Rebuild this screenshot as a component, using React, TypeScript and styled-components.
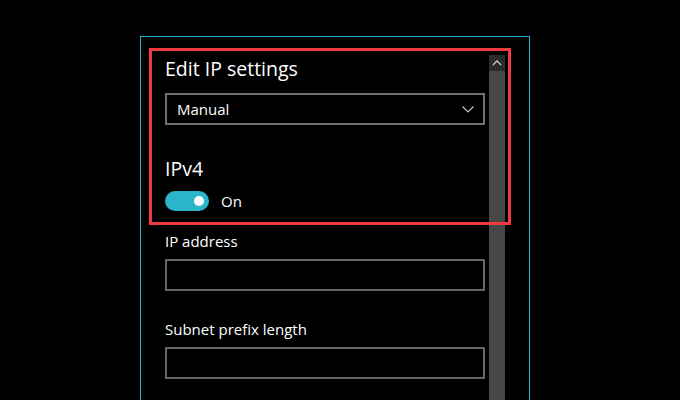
import React from "react";
import styled, { createGlobalStyle } from "styled-components";

const GlobalStyle = createGlobalStyle`
  html, body {
    margin: 0;
    padding: 0;
    background: #000;
    overflow: hidden;
  }
  body {
    font-family: "Open Sans", "Noto Sans", sans-serif;
    color: #fff;
  }
`;

const Page = styled.div`
  position: relative;
  width: 680px;
  height: 400px;
  padding: 36px 0 0 140px;
  box-sizing: border-box;
  overflow: hidden;
`;

const Frame = styled.div`
  width: 390px;
  height: 364px;
  box-sizing: border-box;
  border: 1px solid #29aecd;
  border-bottom: 0;
  display: flex;
`;

const Content = styled.div`
  width: 320px;
  padding: 18px 0 0 24px;
  display: flex;
  flex-direction: column;
`;

const Title = styled.div`
  font-size: 19.5px;
  line-height: 28px;
`;

const Heading = styled(Title)`
  margin-top: 30px;
`;

const Select = styled.div`
  margin-top: 10px;
  height: 32px;
  box-sizing: border-box;
  border: 2px solid #707070;
  display: flex;
  align-items: center;
  justify-content: space-between;
  padding: 0 9px 0 10px;
  font-size: 15px;
`;

const ToggleRow = styled.div`
  margin-top: 8px;
  display: flex;
  align-items: center;
  gap: 12px;
  font-size: 15px;
  line-height: 20px;
`;

const Track = styled.div<{ $on: boolean }>`
  width: 44px;
  height: 20px;
  border-radius: 10px;
  background: ${(p) => (p.$on ? "#2ab5c9" : "transparent")};
  display: flex;
  align-items: center;
  justify-content: ${(p) => (p.$on ? "flex-end" : "flex-start")};
  padding: 0 5px;
  box-sizing: border-box;
`;

const Knob = styled.div`
  width: 10px;
  height: 10px;
  border-radius: 50%;
  background: #fff;
`;

const Label = styled.div<{ $gap: number }>`
  margin-top: ${(p) => p.$gap}px;
  font-size: 15px;
  line-height: 20px;
`;

const Input = styled.div`
  margin-top: 8px;
  height: 32px;
  box-sizing: border-box;
  border: 2px solid #666;
`;

const ScrollBar = styled.div`
  margin: 18px 0 0 4px;
  width: 16px;
  display: flex;
  flex-direction: column;
`;

const ScrollButton = styled.div`
  height: 16px;
  background: #2b2b2b;
  display: flex;
  align-items: center;
  justify-content: center;
`;

const ScrollTrack = styled.div`
  flex: 1;
  background: #474747;
`;

const Highlight = styled.div`
  position: absolute;
  left: 149px;
  top: 48px;
  width: 362px;
  height: 177px;
  box-sizing: border-box;
  border: 3px solid #ef3b41;
  pointer-events: none;
`;

const Chevron = ({ up }: { up?: boolean }) => (
  <svg width={up ? 10 : 12} height={up ? 6 : 7} viewBox="0 0 12 7">
    <path
      d={up ? "M1 6 L6 1 L11 6" : "M0.5 0.5 L6 6 L11.5 0.5"}
      fill="none"
      stroke={up ? "#e0e0e0" : "#c8c8c8"}
      strokeWidth={up ? 1.4 : 1.1}
    />
  </svg>
);

export default function App() {
  return (
    <Page>
      <GlobalStyle />
      <Frame>
        <Content>
          <Title>Edit IP settings</Title>
          <Select>
            <span>Manual</span>
            <Chevron />
          </Select>
          <Heading>IPv4</Heading>
          <ToggleRow>
            <Track $on>
              <Knob />
            </Track>
            <span>On</span>
          </ToggleRow>
          <Label $gap={20}>IP address</Label>
          <Input />
          <Label $gap={28}>Subnet prefix length</Label>
          <Input />
        </Content>
        <ScrollBar>
          <ScrollButton>
            <Chevron up />
          </ScrollButton>
          <ScrollTrack />
        </ScrollBar>
      </Frame>
      <Highlight />
    </Page>
  );
}
